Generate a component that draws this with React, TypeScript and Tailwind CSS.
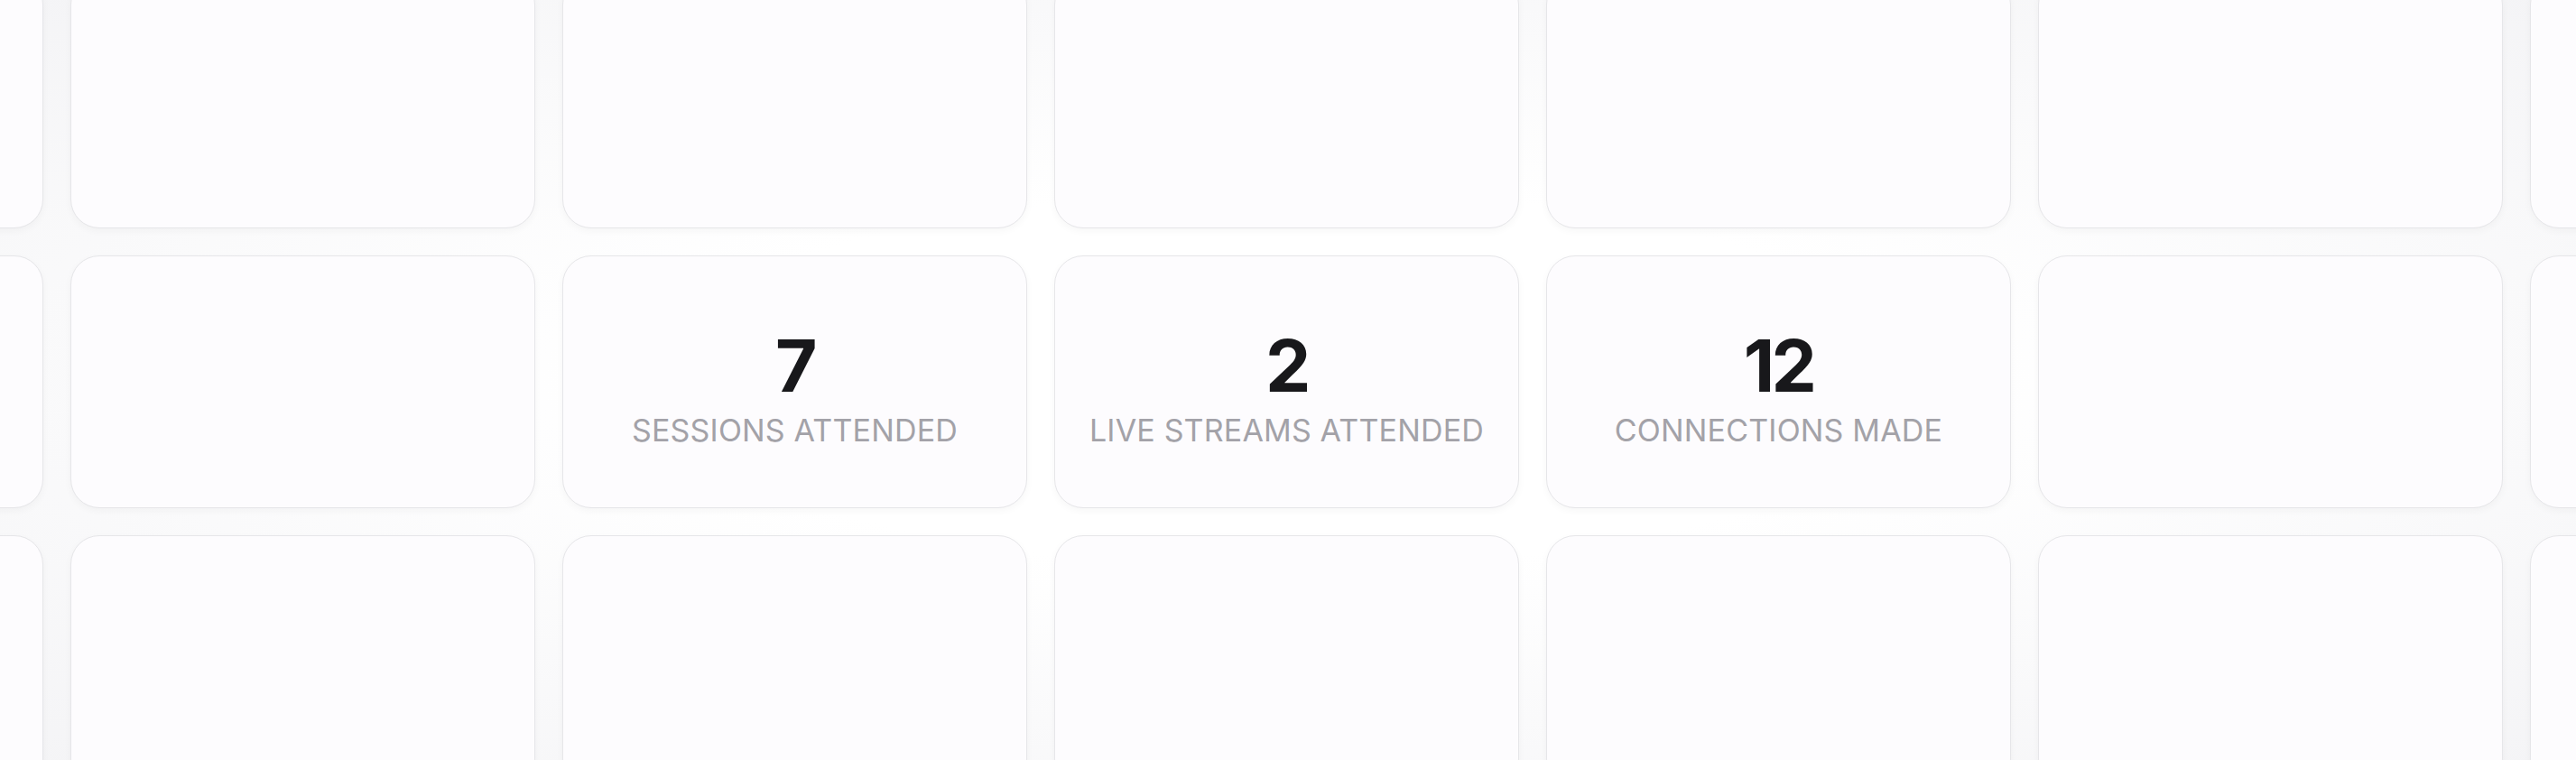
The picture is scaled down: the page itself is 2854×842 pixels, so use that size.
const stats: Record<string, { value: string; label: string }> = {
  "1-2": { value: "7", label: "SESSIONS ATTENDED" },
  "1-3": { value: "2", label: "LIVE STREAMS ATTENDED" },
  "1-4": { value: "12", label: "CONNECTIONS MADE" },
};

function Tile({ stat }: { stat?: { value: string; label: string } }) {
  return (
    <div className="flex flex-col items-center justify-center rounded-[32px] border border-[#e6e6e9] bg-[#fdfcfe] pt-3 shadow-[0_3px_8px_rgba(20,20,40,0.035)]">
      {stat && (
        <>
          <div className="text-[80px] leading-none font-bold tracking-[-0.045em] text-[#18181b]">
            {stat.value}
          </div>
          <div className="mt-[15px] text-[34px] leading-none font-normal tracking-[0.005em] text-[#a3a2a8]">
            {stat.label}
          </div>
        </>
      )}
    </div>
  );
}

export default function App() {
  const rows = [0, 1, 2];
  const cols = [0, 1, 2, 3, 4, 5, 6];

  return (
    <div
      className="flex h-[842px] w-full items-center justify-center overflow-hidden bg-[radial-gradient(ellipse_at_center,#ffffff_0%,#ffffff_35%,#f4f4f6_100%)]"
      style={{ fontFamily: "Inter, 'Noto Sans', sans-serif" }}
    >
      <div className="mt-[4px] -ml-[3px] grid shrink-0 grid-cols-[repeat(7,515px)] grid-rows-[repeat(3,280px)] gap-[30px]">
        {rows.map((r) =>
          cols.map((c) => <Tile key={`${r}-${c}`} stat={stats[`${r}-${c}`]} />)
        )}
      </div>
    </div>
  );
}
